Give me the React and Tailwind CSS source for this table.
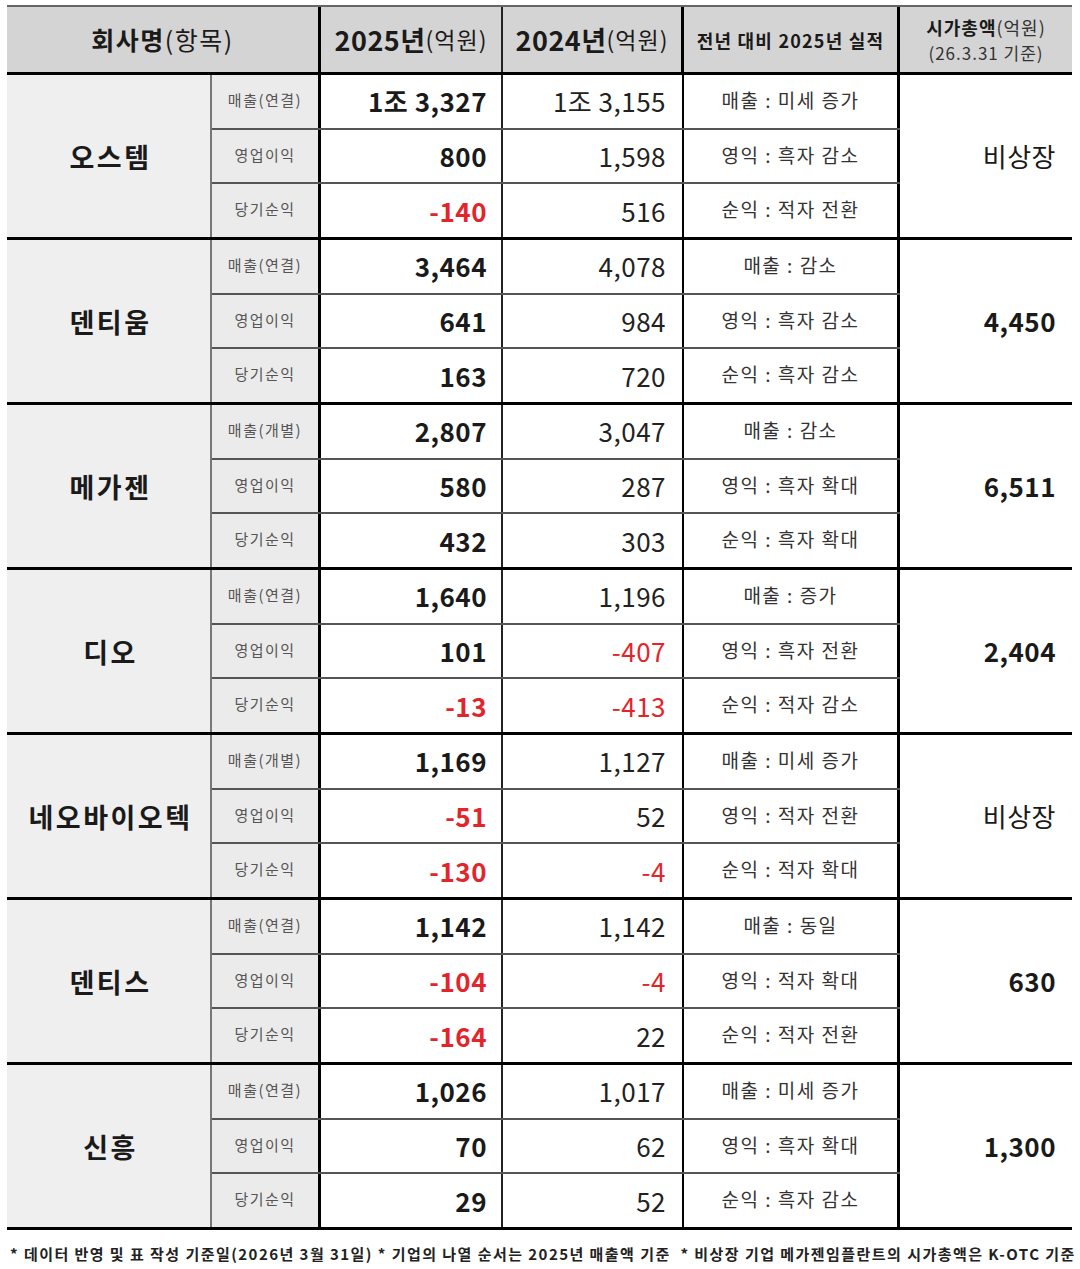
const companies = [
  {
    name: '오스템',
    rows: [
      ['매출(연결)', '1조 3,327', '1조 3,155', '매출 : 미세 증가'],
      ['영업이익', '800', '1,598', '영익 : 흑자 감소'],
      ['당기순익', '-140', '516', '순익 : 적자 전환'],
    ],
    cap: '비상장',
  },
  {
    name: '덴티움',
    rows: [
      ['매출(연결)', '3,464', '4,078', '매출 : 감소'],
      ['영업이익', '641', '984', '영익 : 흑자 감소'],
      ['당기순익', '163', '720', '순익 : 흑자 감소'],
    ],
    cap: '4,450',
  },
  {
    name: '메가젠',
    rows: [
      ['매출(개별)', '2,807', '3,047', '매출 : 감소'],
      ['영업이익', '580', '287', '영익 : 흑자 확대'],
      ['당기순익', '432', '303', '순익 : 흑자 확대'],
    ],
    cap: '6,511',
  },
  {
    name: '디오',
    rows: [
      ['매출(연결)', '1,640', '1,196', '매출 : 증가'],
      ['영업이익', '101', '-407', '영익 : 흑자 전환'],
      ['당기순익', '-13', '-413', '순익 : 적자 감소'],
    ],
    cap: '2,404',
  },
  {
    name: '네오바이오텍',
    rows: [
      ['매출(개별)', '1,169', '1,127', '매출 : 미세 증가'],
      ['영업이익', '-51', '52', '영익 : 적자 전환'],
      ['당기순익', '-130', '-4', '순익 : 적자 확대'],
    ],
    cap: '비상장',
  },
  {
    name: '덴티스',
    rows: [
      ['매출(연결)', '1,142', '1,142', '매출 : 동일'],
      ['영업이익', '-104', '-4', '영익 : 적자 확대'],
      ['당기순익', '-164', '22', '순익 : 적자 전환'],
    ],
    cap: '630',
  },
  {
    name: '신흥',
    rows: [
      ['매출(연결)', '1,026', '1,017', '매출 : 미세 증가'],
      ['영업이익', '70', '62', '영익 : 흑자 확대'],
      ['당기순익', '29', '52', '순익 : 흑자 감소'],
    ],
    cap: '1,300',
  },
];

const isNeg = (v) => v.startsWith('-');

const Group = ({ company }) => (
  <div className="flex h-[165px] border-b-[3px] border-black">
    <div className="w-[205px] flex items-center justify-center pl-[4px] bg-[#efefef] border-r-2 border-[#777] text-[27px] font-bold tracking-[2.5px] text-[#1a1a1a]">
      {company.name}
    </div>
    <div className="w-[688px] flex flex-col">
      {company.rows.map((row, i) => (
        <div
          key={row[0]}
          className={`flex flex-1 ${i < 2 ? 'border-b-2 border-[#555]' : ''}`}
        >
          <div className="w-[109px] flex items-center justify-center bg-[#ebebeb] border-r-[3px] border-black text-[15px] tracking-[1.5px] text-[#555] pb-1">
            {row[0]}
          </div>
          <div
            className={`w-[182px] flex items-center justify-end pr-[14px] border-r-2 border-[#222] text-[26px] font-bold tracking-[0.5px] ${
              isNeg(row[1]) ? 'text-[#e3242b]' : 'text-[#1a1a1a]'
            }`}
          >
            {row[1]}
          </div>
          <div
            className={`w-[181px] flex items-center justify-end pr-[16px] border-r-2 border-black text-[26px] tracking-[0.5px] ${
              isNeg(row[2]) ? 'text-[#e3242b]' : 'text-[#222]'
            }`}
          >
            {row[2]}
          </div>
          <div className="w-[216px] flex items-center justify-center border-r-[3px] border-black text-[19px] tracking-[1.5px] text-[#333] pb-1">
            {row[3]}
          </div>
        </div>
      ))}
    </div>
    <div
      className={`flex-1 flex items-center justify-end pr-[16px] text-[26px] tracking-[0.5px] text-[#1a1a1a] ${
        company.cap === '비상장' ? 'font-normal' : 'font-bold'
      }`}
    >
      {company.cap}
    </div>
  </div>
);

export default function App() {
  return (
    <div className="w-[1080px] h-[1269px] bg-white font-['Noto_Sans_CJK_KR','Noto_Sans',sans-serif] leading-none pt-[5px]">
      <div className="ml-[7px] w-[1065px]">
        <div className="flex h-[70px] bg-[#d4d4d4] border-t-2 border-[#666] border-b-[3px] border-b-black">
          <div className="w-[314px] flex items-center justify-center border-r-[3px] border-black text-[25px] tracking-[1.5px] text-[#1a1a1a]">
            <span className="font-bold">회사명</span>
            <span>(항목)</span>
          </div>
          <div className="w-[182px] flex items-center justify-center border-r-2 border-[#222] text-[#1a1a1a]">
            <span className="text-[27px] font-bold tracking-[0.5px]">2025년</span>
            <span className="text-[23px] tracking-[1px]">(억원)</span>
          </div>
          <div className="w-[181px] flex items-center justify-center border-r-[3px] border-black text-[#1a1a1a]">
            <span className="text-[27px] font-bold tracking-[0.5px]">2024년</span>
            <span className="text-[23px] tracking-[1px]">(억원)</span>
          </div>
          <div className="w-[216px] flex items-center justify-center border-r-[3px] border-black text-[18px] font-bold tracking-[1.2px] text-[#1a1a1a]">
            전년 대비 2025년 실적
          </div>
          <div className="flex-1 flex flex-col items-center justify-center gap-[8px] text-[#333] tracking-[1px]">
            <div className="text-[18px]">
              <span className="font-bold text-[#1a1a1a]">시가총액</span>
              <span>(억원)</span>
            </div>
            <div className="text-[17px]">(26.3.31 기준)</div>
          </div>
        </div>
        {companies.map((c) => (
          <Group key={c.name} company={c} />
        ))}
      </div>
      <div className="mt-[16px] pl-[10px] text-[15px] font-bold tracking-[1.45px] text-[#222] whitespace-nowrap">
        * 데이터 반영 및 표 작성 기준일(2026년 3월 31일) * 기업의 나열 순서는 2025년 매출액 기준 &nbsp;* 비상장 기업 메가젠임플란트의 시가총액은 K-OTC 기준
      </div>
    </div>
  );
}
